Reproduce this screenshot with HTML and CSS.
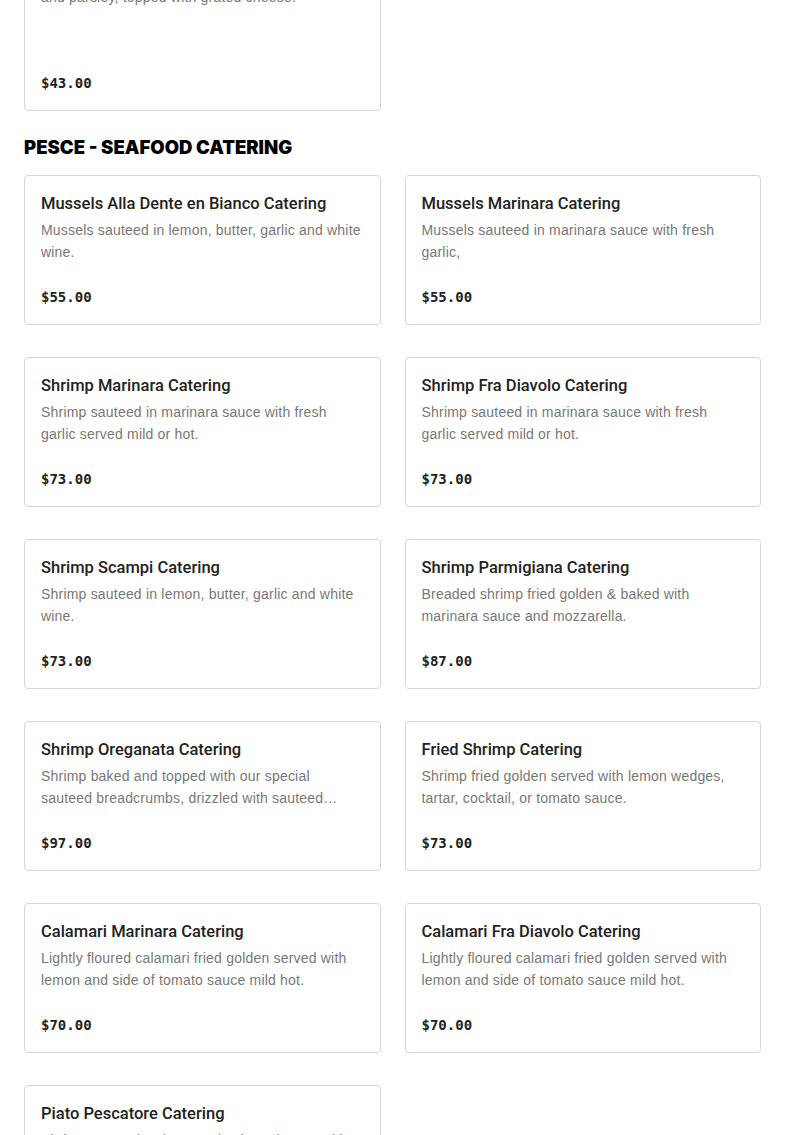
FILE: index.html
```html
<!DOCTYPE html>
<html lang="en">
<head>
<meta charset="utf-8">
<title>Catering Menu</title>
<link rel="stylesheet" href="styles.css">
</head>
<body>
<main class="menu">
  <section class="section section-prev">
    <div class="grid">
      <article class="card card-tall">
        <h3 class="card-title">Linguine Aglio e Olio Catering</h3>
        <p class="card-desc">Linguine tossed with garlic, extra virgin olive oil and parsley, topped with grated cheese.</p>
        <p class="card-price">$43.00</p>
      </article>
    </div>
  </section>

  <section class="section">
    <h2 class="section-title">PESCE - SEAFOOD CATERING</h2>
    <div class="grid">
      <article class="card">
        <h3 class="card-title">Mussels Alla Dente en Bianco Catering</h3>
        <p class="card-desc">Mussels sauteed in lemon, butter, garlic and white wine.</p>
        <p class="card-price">$55.00</p>
      </article>
      <article class="card">
        <h3 class="card-title">Mussels Marinara Catering</h3>
        <p class="card-desc">Mussels sauteed in marinara sauce with fresh garlic,</p>
        <p class="card-price">$55.00</p>
      </article>
      <article class="card">
        <h3 class="card-title">Shrimp Marinara Catering</h3>
        <p class="card-desc">Shrimp sauteed in marinara sauce with fresh garlic served mild or hot.</p>
        <p class="card-price">$73.00</p>
      </article>
      <article class="card">
        <h3 class="card-title">Shrimp Fra Diavolo Catering</h3>
        <p class="card-desc">Shrimp sauteed in marinara sauce with fresh garlic served mild or hot.</p>
        <p class="card-price">$73.00</p>
      </article>
      <article class="card">
        <h3 class="card-title">Shrimp Scampi Catering</h3>
        <p class="card-desc">Shrimp sauteed in lemon, butter, garlic and white wine.</p>
        <p class="card-price">$73.00</p>
      </article>
      <article class="card">
        <h3 class="card-title">Shrimp Parmigiana Catering</h3>
        <p class="card-desc">Breaded shrimp fried golden &amp; baked with marinara sauce and mozzarella.</p>
        <p class="card-price">$87.00</p>
      </article>
      <article class="card">
        <h3 class="card-title">Shrimp Oreganata Catering</h3>
        <p class="card-desc">Shrimp baked and topped with our special sauteed breadcrumbs, drizzled with sauteed garlic, lemon and white wine.</p>
        <p class="card-price">$97.00</p>
      </article>
      <article class="card">
        <h3 class="card-title">Fried Shrimp Catering</h3>
        <p class="card-desc">Shrimp fried golden served with lemon wedges, tartar, cocktail, or tomato sauce.</p>
        <p class="card-price">$73.00</p>
      </article>
      <article class="card">
        <h3 class="card-title">Calamari Marinara Catering</h3>
        <p class="card-desc">Lightly floured calamari fried golden served with lemon and side of tomato sauce mild hot.</p>
        <p class="card-price">$70.00</p>
      </article>
      <article class="card">
        <h3 class="card-title">Calamari Fra Diavolo Catering</h3>
        <p class="card-desc">Lightly floured calamari fried golden served with lemon and side of tomato sauce mild hot.</p>
        <p class="card-price">$70.00</p>
      </article>
      <article class="card">
        <h3 class="card-title">Piato Pescatore Catering</h3>
        <p class="card-desc">Shrimp, mussels, clams and calamari sauteed in marinara sauce served over linguine.</p>
        <p class="card-price">$110.00</p>
      </article>
    </div>
  </section>
</main>
</body>
</html>
```

FILE: styles.css
```css
* { box-sizing: border-box; }

html, body {
  margin: 0;
  padding: 0;
  background: #ffffff;
}

body {
  font-family: "Liberation Sans", Arial, sans-serif;
  color: #222222;
  overflow: hidden;
}

.menu {
  padding: 0 24px;
}

.section-prev {
  margin-top: -80px;
}

.section-title {
  margin: 24px 0 16px;
  font-family: Inter, "Liberation Sans", Arial, sans-serif;
  font-weight: 900;
  font-size: 18.5px;
  line-height: 24px;
  color: #000000;
}

.grid {
  display: grid;
  grid-template-columns: 1fr 1fr;
  column-gap: 24px;
  row-gap: 32px;
}

.card {
  display: flex;
  flex-direction: column;
  border: 1px solid #d6d6d6;
  border-radius: 4px;
  padding: 16px;
  min-height: 150px;
  background: #ffffff;
}

.card-tall {
  min-height: 191px;
}

.card-title {
  margin: 1px 0 0;
  font-family: Roboto, Lato, "Liberation Sans", Arial, sans-serif;
  font-weight: 500;
  font-size: 16.5px;
  line-height: 22px;
  color: #222222;
}

.card-desc {
  margin: 4px 0 0;
  font-family: "Liberation Sans", Arial, sans-serif;
  font-size: 14px;
  line-height: 22px;
  letter-spacing: 0.2px;
  color: #777777;
  display: -webkit-box;
  -webkit-line-clamp: 2;
  -webkit-box-orient: vertical;
  overflow: hidden;
}

.card-price {
  margin: auto 0 0;
  padding-top: 22px;
  font-family: "DejaVu Sans Mono", "Liberation Mono", monospace;
  font-weight: 700;
  font-size: 14px;
  line-height: 22px;
  color: #222222;
}
```
